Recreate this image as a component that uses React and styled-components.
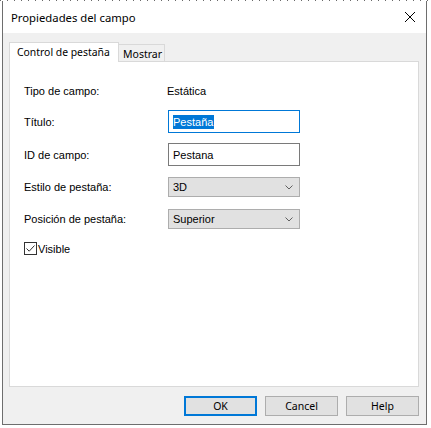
import React from "react";
import styled, { createGlobalStyle } from "styled-components";

const Global = createGlobalStyle`
  html, body { margin: 0; padding: 0; background: #ffffff; }
  body { font-family: "Liberation Sans", Arial, sans-serif; }
  * { box-sizing: border-box; }
`;

const DesktopEdge = styled.div`
  height: 1px;
  width: 431px;
  background: repeating-linear-gradient(90deg, #6a6a6a 0 1px, transparent 1px 7px);
`;

const Window = styled.div`
  margin-left: 2px;
  width: 425px;
  height: 424px;
  border: 1px solid #6e6e6e;
  border-top: none;
  background: #f0f0f0;
  display: flex;
  flex-direction: column;
`;

const TitleBar = styled.div`
  height: 32px;
  background: #ffffff;
  display: flex;
  align-items: center;
  justify-content: space-between;
  padding: 0 9px 0 8px;
`;

const TitleText = styled.span`
  font-family: "Noto Sans", "Open Sans", sans-serif;
  font-size: 11.3px;
  color: #000;
  margin-top: 1px;
  white-space: nowrap;
`;

const CloseIcon = styled.svg`
  width: 10px;
  height: 10px;
  margin-right: 2px;
`;

const Body = styled.div`
  flex: 1;
  display: flex;
  flex-direction: column;
  padding: 9px 7px 0 6px;
`;

const TabStrip = styled.div`
  display: flex;
  align-items: flex-end;
  height: 19px;
  position: relative;
  z-index: 1;
`;

const Tab = styled.div`
  font-family: "Noto Sans", "Open Sans", sans-serif;
  font-size: ${(p) => (p.$active ? "10.4px" : "10.5px")};
  white-space: nowrap;
  color: #000;
  display: flex;
  align-items: center;
  border: 1px solid #d9d9d9;
  border-bottom: none;
  ${(p) =>
    p.$active
      ? `
    height: 20px;
    margin-bottom: -1px;
    background: #ffffff;
    padding: 0 0 1px 7px;
    width: 110px;
  `
      : `
    height: 17px;
    background: #f0f0f0;
    border-left: none;
    padding: 2px 0 0 4px;
    width: 46px;
  `}
`;

const Panel = styled.div`
  height: 326px;
  background: #ffffff;
  border: 1px solid #d9d9d9;
  padding: 0 0 0 14px;
  display: flex;
  flex-direction: column;
`;

const Row = styled.div`
  display: flex;
  align-items: center;
  height: ${(p) => p.$h}px;
  margin-top: ${(p) => p.$mt}px;
`;

const Label = styled.span`
  width: 144px;
  font-size: 11px;
  color: #000;
`;

const Static = styled.span`
  font-size: 11px;
  color: #000;
  margin-left: -1px;
`;

const TextBox = styled.div`
  width: 132px;
  height: 23px;
  border: 1px solid ${(p) => (p.$focused ? "#0078d7" : "#7a7a7a")};
  background: #fff;
  display: flex;
  align-items: center;
  padding-left: 4px;
  font-size: 11px;
  color: #000;
`;

const Selected = styled.span`
  background: #0078d7;
  color: #fff;
  line-height: 14px;
  padding-right: 1px;
`;

const Select = styled.div`
  width: 132px;
  height: 20px;
  border: 1px solid #adadad;
  background: #e1e1e1;
  display: flex;
  align-items: center;
  justify-content: space-between;
  padding: 0 6px 0 4px;
  font-size: 11px;
  color: #000;
`;

const Chevron = styled.svg`
  width: 8px;
  height: 5px;
`;

const CheckRow = styled.label`
  display: flex;
  align-items: center;
  gap: 1px;
  font-size: 11px;
  color: #000;
`;

const CheckBox = styled.span`
  width: 13px;
  height: 13px;
  border: 1px solid #333;
  background: #fff;
  display: flex;
  align-items: center;
  justify-content: center;
`;

const ButtonBar = styled.div`
  display: flex;
  justify-content: flex-end;
  gap: 8px;
  margin-top: 9px;
`;

const Button = styled.div`
  width: 73px;
  height: 20px;
  background: #e1e1e1;
  border: ${(p) => (p.$default ? "2px solid #0078d7" : "1px solid #adadad")};
  display: flex;
  align-items: center;
  justify-content: center;
  font-family: "Noto Sans", "Open Sans", sans-serif;
  font-size: 10.5px;
  color: #000;
`;

const ChevronDown = () => (
  <Chevron viewBox="0 0 8 5">
    <path d="M0.5 0.5 L4 4 L7.5 0.5" fill="none" stroke="#606060" strokeWidth="1" />
  </Chevron>
);

export default function App() {
  return (
    <>
      <Global />
      <DesktopEdge />
      <Window>
        <TitleBar>
          <TitleText>Propiedades del campo</TitleText>
          <CloseIcon viewBox="0 0 10 10">
            <path d="M0 0 L10 10 M10 0 L0 10" stroke="#000" strokeWidth="1" fill="none" />
          </CloseIcon>
        </TitleBar>
        <Body>
          <TabStrip>
            <Tab $active>Control de pestaña</Tab>
            <Tab>Mostrar</Tab>
          </TabStrip>
          <Panel>
            <Row $h={23} $mt={17}>
              <Label>Tipo de campo:</Label>
              <Static>Estática</Static>
            </Row>
            <Row $h={23} $mt={8}>
              <Label>Título:</Label>
              <TextBox $focused>
                <Selected>Pestaña</Selected>
              </TextBox>
            </Row>
            <Row $h={23} $mt={10}>
              <Label>ID de campo:</Label>
              <TextBox>Pestana</TextBox>
            </Row>
            <Row $h={20} $mt={11}>
              <Label>Estilo de pestaña:</Label>
              <Select>
                <span>3D</span>
                <ChevronDown />
              </Select>
            </Row>
            <Row $h={20} $mt={12}>
              <Label>Posición de pestaña:</Label>
              <Select>
                <span>Superior</span>
                <ChevronDown />
              </Select>
            </Row>
            <Row $h={13} $mt={13}>
              <CheckRow>
                <CheckBox>
                  <svg width="11" height="11" viewBox="0 0 11 11">
                    <path d="M1.5 5.5 L4.2 8.2 L9.5 2.5" fill="none" stroke="#333" strokeWidth="1" />
                  </svg>
                </CheckBox>
                Visible
              </CheckRow>
            </Row>
          </Panel>
          <ButtonBar>
            <Button $default>OK</Button>
            <Button>Cancel</Button>
            <Button>Help</Button>
          </ButtonBar>
        </Body>
      </Window>
    </>
  );
}
